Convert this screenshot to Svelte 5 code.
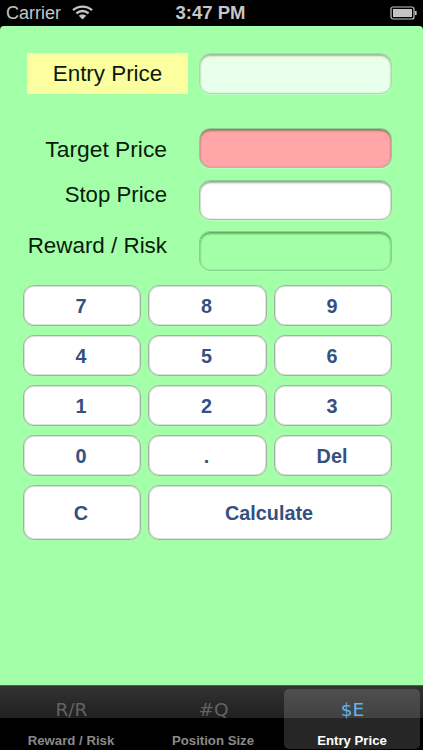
<script>
  const keys = [
    { t: '7' }, { t: '8' }, { t: '9' },
    { t: '4' }, { t: '5' }, { t: '6' },
    { t: '1' }, { t: '2' }, { t: '3' },
    { t: '0' }, { t: '.' }, { t: 'Del' },
    { t: 'C', tall: true }, { t: 'Calculate', wide: true, tall: true }
  ];
  const tabs = [
    { i: 'R/R', l: 'Reward / Risk' },
    { i: '#Q', l: 'Position Size' },
    { i: '$E', l: 'Entry Price', on: true }
  ];
</script>

<div class="phone">
  <header class="status">
    <div class="left">
      <span>Carrier</span>
      <svg class="wifi" width="21" height="15" viewBox="0 0 21 15" aria-hidden="true">
        <path d="M1 5.2C6.4 0.4 14.6 0.4 20 5.2" fill="none" stroke="#c4c4c4" stroke-width="2.4"/>
        <path d="M4.4 8.4C8 5.2 13 5.2 16.6 8.4" fill="none" stroke="#c4c4c4" stroke-width="2.4"/>
        <path d="M10.5 14.6L6.8 10.8C8.9 9 12.1 9 14.2 10.8Z" fill="#c4c4c4"/>
      </svg>
    </div>
    <span class="time">3:47 PM</span>
    <svg class="batt" width="28" height="14" viewBox="0 0 28 14" aria-hidden="true">
      <rect x="1" y="1" width="23" height="12" rx="2" fill="none" stroke="#c8c8c8" stroke-width="1.2"/>
      <rect x="3" y="3" width="19" height="8" fill="#c4c4c4"/>
      <path d="M25 5h1.6v4H25z" fill="#c8c8c8"/>
    </svg>
  </header>

  <main class="content">
    <div class="row first">
      <div class="entry">Entry Price</div>
      <div class="field mint"></div>
    </div>
    <div class="row target">
      <div class="label">Target Price</div>
      <div class="field pink"></div>
    </div>
    <div class="row stop">
      <div class="label up small">Stop Price</div>
      <div class="field white"></div>
    </div>
    <div class="row reward">
      <div class="label up mid">Reward / Risk</div>
      <div class="field clear"></div>
    </div>

    <div class="pad">
      {#each keys as k}
        <button class:wide={k.wide} class:tall={k.tall}>{k.t}</button>
      {/each}
    </div>
  </main>

  <nav class="tabbar">
    {#each tabs as t}
      <div class="tab" class:on={t.on}>
        <span class="glyph">{t.i}</span>
        <span class="name">{t.l}</span>
      </div>
    {/each}
  </nav>
</div>

<style>
  :global(body) { margin: 0; background: #000; }
  .phone {
    width: 423px;
    height: 750px;
    display: flex;
    flex-direction: column;
    background: #000;
    overflow: hidden;
    font-family: "Liberation Sans", Arial, sans-serif;
  }
  .status {
    height: 26px;
    flex: none;
    display: grid;
    grid-template-columns: 1fr auto 1fr;
    align-items: center;
    padding: 0 5px 0 6px;
    color: #c6c6c6;
    font-size: 18px;
    box-sizing: border-box;
  }
  .left { display: flex; align-items: center; gap: 11px; }
  .wifi { margin-top: -1px; }
  .time { font-weight: 700; font-size: 18.5px; margin-right: 3px; }
  .batt { justify-self: end; }
  .content {
    flex: 1;
    background: #a3ffa8;
    border-radius: 4px 4px 0 0;
    padding: 27px 31px 0 23px;
    border-bottom: 1px solid #3f6a42;
    min-height: 0;
  }
  .row { display: flex; align-items: center; height: 40px; }
  .row.first { height: 41px; margin-bottom: 34px; margin-left: 4px; }
  .row.stop { margin-top: 12px; }
  .row.reward { margin-top: 11px; }
  .label {
    width: 144px;
    margin-right: 32px;
    text-align: right;
    font-size: 22.8px;
    color: #0b1a0c;
    padding-top: 2px;
  }
  .label.up { padding: 0 0 11px; }
  .label.small { font-size: 22.2px; }
  .label.mid { font-size: 22.4px; }
  .entry {
    width: 161px;
    height: 41px;
    margin-right: 11px;
    background: #fbff9f;
    color: #0b1a0c;
    font-size: 22.4px;
    line-height: 41px;
    text-align: center;
    flex: none;
  }
  .field {
    width: 193px;
    height: 100%;
    flex: none;
    box-sizing: border-box;
    border-radius: 11px;
    border: 1px solid #8ad08e;
    box-shadow: inset 0 2px 2px rgba(40, 80, 40, 0.45), inset 0 0 2px rgba(40, 80, 40, 0.25), 0 1px 0 rgba(255, 255, 255, 0.25);
  }
  .mint { background: #e8ffea; border-color: #a8dcab; box-shadow: inset 0 2px 2px rgba(40, 100, 40, 0.4), inset 0 0 2px rgba(40, 80, 40, 0.2), 0 1px 1px rgba(255,255,255,0.3); }
  .pink { background: #ffa6a9; }
  .white { background: #fff; }
  .clear { background: #a3ffa8; border-color: #86d48b; }
  .pad {
    display: grid;
    grid-template-columns: 118px 119px 118px;
    grid-auto-rows: 41px;
    column-gap: 7px;
    row-gap: 9px;
    margin-top: 14px;
  }
  button {
    margin: 0;
    padding: 1px 2px 0 0;
    box-sizing: border-box;
    font: 700 19.8px "Liberation Sans", Arial, sans-serif;
    color: #35507f;
    background: #fff;
    border: 1px solid #a3b0a4;
    box-shadow: inset 0 0 0 1px rgba(176, 191, 177, 0.45);
    border-radius: 11px;
  }
  button.tall { height: 55px; }
  button.wide { grid-column: span 2; }
  .tabbar {
    height: 64px;
    flex: none;
    display: grid;
    grid-template-columns: 142px 142px 139px;
    background: linear-gradient(#323232 0, #202020 50%, #000 50%, #000 100%);
    box-sizing: border-box;
  }
  .tab {
    display: flex;
    flex-direction: column;
    align-items: center;
    color: #8a8a8a;
    padding-top: 12px;
    box-sizing: border-box;
  }
  .glyph {
    font-family: "DejaVu Sans", sans-serif;
    font-size: 18.5px;
    line-height: 24px;
    color: #626262;
    margin-left: 1px;
  }
  .name {
    font-size: 13.2px;
    font-weight: 700;
    line-height: 16px;
    margin-top: 11px;
  }
  .tab.on {
    background: rgba(255, 255, 255, 0.15);
    border-radius: 5px;
    margin: 3px 3px 3px 0;
    padding-top: 9px;
    color: #fff;
  }
  .tab.on .glyph { color: #63b4ea; }
</style>
